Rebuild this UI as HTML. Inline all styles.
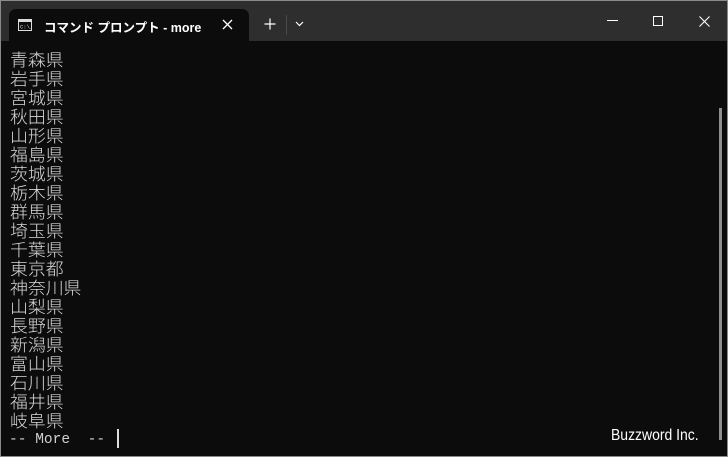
<!DOCTYPE html>
<html><head><meta charset="utf-8"><style>
*{margin:0;padding:0;box-sizing:border-box}
body{width:728px;height:457px;overflow:hidden;background:#0c0c0c;position:relative;font-family:"Liberation Sans","Noto Sans CJK JP",sans-serif}
.frame{position:absolute;inset:0;border:1px solid #8a8a8a;pointer-events:none;z-index:5}
.bar{position:absolute;left:0;top:0;width:728px;height:41px;background:#2e2e2e}
.tab{position:absolute;left:9px;top:9px;width:240px;height:32px;background:#0c0c0c;border-radius:7px 7px 0 0}
.tab .t{position:absolute;left:35px;top:8px;color:#fff;font-size:12.5px;font-weight:bold;font-family:"Liberation Sans","Noto Sans CJK JP",sans-serif;white-space:nowrap}
.term{position:absolute;left:10px;top:49px;color:#d8d8d8;font-size:17px;line-height:19px;font-family:"Noto Sans CJK JP",sans-serif;font-weight:300;white-space:pre;transform:scaleX(1.05);transform-origin:0 0}
.more{position:absolute;left:9px;top:431px;color:#d0d0d0;font-family:"Liberation Mono",monospace;font-size:15px;white-space:pre;transform:scaleX(0.97);transform-origin:0 0}
.cur{position:absolute;left:117px;top:429px;width:2px;height:19px;background:#ddd}
.wm{position:absolute;left:611px;top:427px;color:#fff;font-size:15.5px;font-family:"Liberation Sans",sans-serif;transform:scaleX(0.9);transform-origin:0 0}
.sb{position:absolute;left:719px;top:108px;width:3px;height:332px;background:#8f8f8f}
</style></head><body>
<div class="bar"></div>
<div class="tab">
<svg style="position:absolute;left:9px;top:10px" width="14" height="12" viewBox="0 0 14 12"><rect x="0.5" y="0.5" width="13" height="11" fill="none" stroke="#ddd"/><rect x="1" y="1" width="12" height="2" fill="#ddd"/><text x="2" y="9.5" font-size="5.5" fill="#ddd" font-family="Liberation Mono">C:\_</text></svg>
<div class="t">コマンド プロンプト - more</div>
<svg style="position:absolute;left:213px;top:10px" width="11" height="11" viewBox="0 0 11 11"><path d="M1 1L10 10M10 1L1 10" stroke="#fff" stroke-width="1.3"/></svg>
</div>
<svg style="position:absolute;left:264px;top:18px" width="12" height="12" viewBox="0 0 12 12"><path d="M6 0.5V11.5M0.5 6H11.5" stroke="#fff" stroke-width="1.2"/></svg>
<div style="position:absolute;left:286px;top:15px;width:1px;height:20px;background:#4a4a4a"></div>
<svg style="position:absolute;left:295px;top:21px" width="9" height="6" viewBox="0 0 9 6"><path d="M1 1L4.5 4.5L8 1" stroke="#fff" stroke-width="1.2" fill="none"/></svg>
<div style="position:absolute;left:607px;top:20px;width:11px;height:1px;background:#fff"></div>
<div style="position:absolute;left:653px;top:16px;width:10px;height:10px;border:1px solid #fff"></div>
<svg style="position:absolute;left:699px;top:16px" width="11" height="11" viewBox="0 0 11 11"><path d="M0.5 0.5L10.5 10.5M10.5 0.5L0.5 10.5" stroke="#fff" stroke-width="1.1"/></svg>
<div class="term">青森県
岩手県
宮城県
秋田県
山形県
福島県
茨城県
栃木県
群馬県
埼玉県
千葉県
東京都
神奈川県
山梨県
長野県
新潟県
富山県
石川県
福井県
岐阜県</div>
<div class="more">-- More  --</div>
<div class="cur"></div>
<div class="wm">Buzzword Inc.</div>
<div class="sb"></div>
<div class="frame"></div>
</body></html>
